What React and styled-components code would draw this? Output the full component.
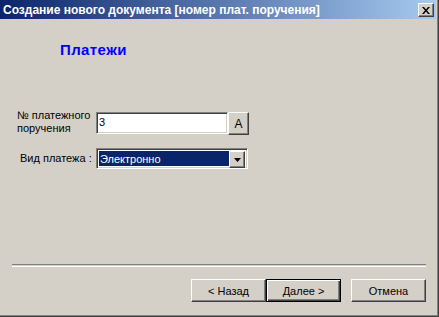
import React from "react";
import styled, { createGlobalStyle } from "styled-components";

const GlobalStyle = createGlobalStyle`
  html, body {
    margin: 0;
    padding: 0;
    background: #d4d0c8;
  }
  body {
    font-family: "Liberation Sans", Arial, sans-serif;
    font-size: 11px;
  }
`;

const Window = styled.div`
  box-sizing: border-box;
  width: 439px;
  height: 317px;
  display: flex;
  flex-direction: column;
  background: #d4d0c8;
  border-right: 1px solid #404040;
  border-bottom: 1px solid #404040;
  box-shadow: inset -1px -1px 0 #808080;
  padding: 0 2px 2px 0;
`;

const TitleBar = styled.div`
  height: 19px;
  flex: none;
  display: flex;
  align-items: center;
  justify-content: space-between;
  padding: 0 2px 0 3px;
  background: linear-gradient(to right, #0a246a, #a6caf0);
  color: #fff;
  font-weight: bold;
  font-size: 12px;
  white-space: nowrap;
`;

const raised = `
  box-sizing: border-box;
  background: #d4d0c8;
  border: 1px solid;
  border-color: #fff #404040 #404040 #fff;
  box-shadow: inset -1px -1px 0 #808080;
`;

const CloseButton = styled.div`
  ${raised}
  width: 16px;
  height: 14px;
  display: flex;
  align-items: center;
  justify-content: center;
  margin-top: 1px;
`;

const Heading = styled.div`
  margin: 23px 0 0 60px;
  font-size: 15px;
  line-height: 16px;
  letter-spacing: 0.4px;
  font-weight: bold;
  color: #0000ff;
`;

const Form = styled.div`
  display: flex;
  flex-direction: column;
  gap: 13px;
  margin-top: 54px;
`;

const Row = styled.div`
  display: flex;
  align-items: ${p => (p.$center ? "center" : "flex-start")};
`;

const Label = styled.div`
  box-sizing: border-box;
  width: 96px;
  padding-left: ${p => p.$indent}px;
  margin-top: ${p => p.$shift || 0}px;
  line-height: 13px;
  color: #000;
`;

const sunken = `
  box-sizing: border-box;
  border: 1px solid;
  border-color: #808080 #fff #fff #808080;
  box-shadow: inset 1px 1px 0 #404040, inset -1px -1px 0 #d4d0c8;
`;

const TextField = styled.div`
  ${sunken}
  width: 132px;
  height: 22px;
  background: #fff;
  padding: 3px 0 0 2px;
  line-height: 13px;
  color: #000;
`;

const SmallButton = styled.div`
  ${raised}
  width: 21px;
  height: 23px;
  display: flex;
  align-items: center;
  justify-content: center;
  font-size: 12px;
  color: #000;
`;

const Select = styled.div`
  ${sunken}
  width: 152px;
  height: 21px;
  display: flex;
  padding: 2px;
  background: #fff;
`;

const SelectValue = styled.div`
  flex: 1;
  background: #0a246a;
  color: #fff;
  padding-left: 1px;
  line-height: 17px;
`;

const ArrowButton = styled.div`
  ${raised}
  width: 16px;
  height: 17px;
  display: flex;
  align-items: center;
  justify-content: center;
`;

const Footer = styled.div`
  margin-top: auto;
  padding-bottom: 12px;
`;

const Separator = styled.div`
  height: 1px;
  margin: 0 10px 0 12px;
  border-top: 1px solid #808080;
  border-bottom: 1px solid #fff;
`;

const ButtonRow = styled.div`
  display: flex;
  justify-content: flex-end;
  padding-right: 10px;
  margin-top: 12px;
`;

const Button = styled.div`
  box-sizing: border-box;
  width: 75px;
  height: 23px;
  margin-left: ${p => p.$gap || 0}px;
  display: flex;
  align-items: center;
  justify-content: center;
  background: #d4d0c8;
  color: #000;
  border: 1px solid;
  border-color: ${p => (p.$default ? "#000" : "#fff #404040 #404040 #fff")};
  box-shadow: ${p =>
    p.$default
      ? "inset 1px 1px 0 #fff, inset -1px -1px 0 #404040, inset -2px -2px 0 #808080"
      : "inset -1px -1px 0 #808080"};
`;

const App = () => {
  return (
    <>
      <GlobalStyle />
      <Window>
        <TitleBar>
          <span>Создание нового документа [номер плат. поручения]</span>
          <CloseButton>
            <svg width="8" height="7" viewBox="0 0 8 7">
              <path d="M0 0h2l2 2.5L6 0h2L5 3.5 8 7H6L4 4.5 2 7H0l3-3.5z" fill="#000" />
            </svg>
          </CloseButton>
        </TitleBar>
        <Heading>Платежи</Heading>
        <Form>
          <Row>
            <Label $indent={17} $shift={-3}>
              № платежного
              <br />
              поручения
            </Label>
            <TextField>3</TextField>
            <SmallButton>A</SmallButton>
          </Row>
          <Row $center>
            <Label $indent={20}>Вид платежа :</Label>
            <Select>
              <SelectValue>Электронно</SelectValue>
              <ArrowButton>
                <svg width="7" height="4" viewBox="0 0 7 4">
                  <path d="M0 0h7L3.5 4z" fill="#000" />
                </svg>
              </ArrowButton>
            </Select>
          </Row>
        </Form>
        <Footer>
          <Separator />
          <ButtonRow>
            <Button>&lt; Назад</Button>
            <Button $default>Далее &gt;</Button>
            <Button $gap={10}>Отмена</Button>
          </ButtonRow>
        </Footer>
      </Window>
    </>
  );
};

export default App;
